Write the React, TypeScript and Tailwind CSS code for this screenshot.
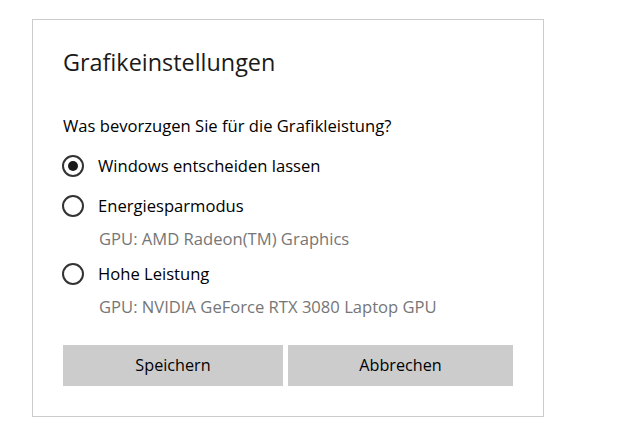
export default function App() {
  const options = [
    { label: "Windows entscheiden lassen", sub: "", checked: true },
    { label: "Energiesparmodus", sub: "GPU: AMD Radeon(TM) Graphics", checked: false },
    { label: "Hohe Leistung", sub: "GPU: NVIDIA GeForce RTX 3080 Laptop GPU", checked: false },
  ];

  return (
    <div className="h-[423px] w-[620px] bg-white pl-[32px] pt-[19px] font-['Open_Sans',sans-serif] text-black">
      <div className="h-[398px] w-[512px] border border-[#cccccc] pl-[30px] pr-[29px] pt-[27px]">
        <h1 className="text-[23.4px] leading-[30px] font-normal text-[#1a1a1a]">Grafikeinstellungen</h1>
        <p className="mt-[39px] text-[16.6px] leading-[20px]">Was bevorzugen Sie für die Grafikleistung?</p>
        <div className="mt-[20px] flex flex-col">
          {options.map((o, i) => (
            <div key={o.label} className={i === 0 ? "" : i === 1 ? "mt-[20px]" : "mt-[15px]"}>
              <div className="flex h-[20px] items-center gap-[14px]">
                <span className="-ml-[1px] flex h-[22px] w-[22px] items-center justify-center rounded-full border-2 border-[#333333]">
                  {o.checked && <span className="h-[10px] w-[10px] rounded-full bg-[#1a1a1a]" />}
                </span>
                <span className="text-[16.6px] leading-[20px]">{o.label}</span>
              </div>
              {o.sub && (
                <div className="mt-[13px] pl-[36px] text-[16.6px] leading-[20px] text-[#767676]">{o.sub}</div>
              )}
            </div>
          ))}
        </div>
        <div className="mt-[28px] flex gap-[5px]">
          <button className="h-[41px] w-[220px] bg-[#cccccc] text-[16.2px]">Speichern</button>
          <button className="h-[41px] w-[225px] bg-[#cccccc] text-[16.2px]">Abbrechen</button>
        </div>
      </div>
    </div>
  );
}
